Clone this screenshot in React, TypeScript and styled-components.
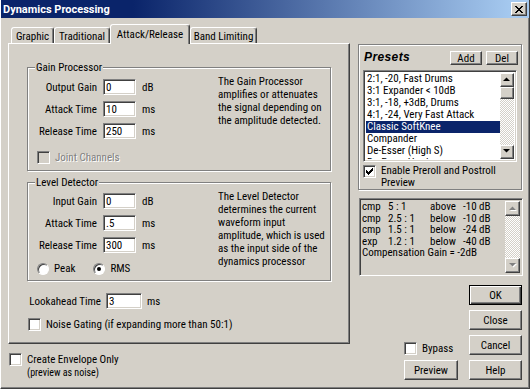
import styled, { createGlobalStyle, css } from "styled-components";

const GlobalStyle = createGlobalStyle`
  html, body {
    margin: 0;
    padding: 0;
    background: #d4d0c8;
  }
  body {
    font-family: "Roboto Condensed", "Liberation Sans", Arial, sans-serif;
    font-size: 11px;
    color: #000;
  }
  * { box-sizing: border-box; }
`

const presets = [
  '2:1, -20, Fast Drums',
  '3:1 Expander < 10dB',
  '3:1, -18, +3dB, Drums',
  '4:1, -24, Very Fast Attack',
  'Classic SoftKnee',
  'Compander',
  'De-Esser (High S)',
  'De-Esser Hard',
]

const infoRows = [
  ['cmp', '5 : 1', 'above', '-10 dB'],
  ['cmp', '2.5 : 1', 'below', '-10 dB'],
  ['cmp', '1.5 : 1', 'below', '-24 dB'],
  ['exp', '1.2 : 1', 'below', '-40 dB'],
]

// classic 7x7 check mark, one 3px column per x
const checkCols = [2, 3, 4, 3, 2, 1, 0]

function CheckBox(props: { checked?: boolean, disabled?: boolean }) {
  return (
    <CheckSquare $disabled={props.disabled}>
      {props.checked &&
        <svg width="7" height="7" viewBox="0 0 7 7" shapeRendering="crispEdges">
          {checkCols.map((y, x) => <rect key={x} x={x} y={y} width="1" height="3" fill="#000" />)}
        </svg>
      }
    </CheckSquare>
  )
}

function Arrow(props: { up?: boolean, disabled?: boolean }) {
  const points = props.up ? '0,4 7,4 3.5,0.5' : '0,0 7,0 3.5,3.5'
  return (
    <svg width="8" height="6" viewBox="0 0 8 6">
      {props.disabled && <polygon points={points} fill="#fff" transform="translate(1 1)" />}
      <polygon points={points} fill={props.disabled ? '#808080' : '#000'} />
    </svg>
  )
}

type FieldProps = {
  label: string
  value: string
  unit: string
}

function Field(props: FieldProps) {
  return (
    <>
      <FieldLabel>{props.label}</FieldLabel>
      <TextBox readOnly defaultValue={props.value} />
      <Unit>{props.unit}</Unit>
    </>
  )
}

export default function App() {
  return (
    <>
      <GlobalStyle />
      <Window>
        <TitleBar>
          <Title>Dynamics Processing</Title>
          <CloseButton>
            <svg width="8" height="7" viewBox="0 0 8 7" shapeRendering="crispEdges">
              <path d="M0 0h2v1h-2zM6 0h2v1h-2zM1 1h2v1h-2zM5 1h2v1h-2zM2 2h4v1h-4zM3 3h2v1h-2zM2 4h4v1h-4zM1 5h2v1h-2zM5 5h2v1h-2zM0 6h2v1h-2zM6 6h2v1h-2z" fill="#000" />
            </svg>
          </CloseButton>
        </TitleBar>

        <Body>
          <LeftColumn>
            <TabRow>
              <Tab $w={43}>Graphic</Tab>
              <Tab $w={56}>Traditional</Tab>
              <Tab $w={80} $active>Attack/Release</Tab>
              <Tab $w={67}>Band Limiting</Tab>
            </TabRow>

            <TabPanel>
              <GroupBox>
                <Caption>Gain Processor</Caption>
                <GroupInner>
                  <FieldColumn>
                    <FieldGrid $labelW={62} $inputW={33}>
                      <Field label="Output Gain" value="0" unit="dB" />
                      <Field label="Attack Time" value="10" unit="ms" />
                      <Field label="Release Time" value="250" unit="ms" />
                    </FieldGrid>
                    <OptionRow $top={12} $left={2} $disabled>
                      <CheckBox disabled />
                      <span>Joint Channels</span>
                    </OptionRow>
                  </FieldColumn>
                  <Description $top={-4}>
                    The Gain Processor<br />
                    amplifies or attenuates<br />
                    the signal depending on<br />
                    the amplitude detected.
                  </Description>
                </GroupInner>
              </GroupBox>

              <GroupBox $top={11} $bottom={5}>
                <Caption>Level Detector</Caption>
                <GroupInner $top={4}>
                  <FieldColumn>
                    <FieldGrid $labelW={62} $inputW={33}>
                      <Field label="Input Gain" value="0" unit="dB" />
                      <Field label="Attack Time" value=".5" unit="ms" />
                      <Field label="Release Time" value="300" unit="ms" />
                    </FieldGrid>
                    <RadioRow>
                      <OptionRow $left={2}>
                        <Radio />
                        <span>Peak</span>
                      </OptionRow>
                      <OptionRow>
                        <Radio $checked />
                        <span>RMS</span>
                      </OptionRow>
                    </RadioRow>
                  </FieldColumn>
                  <Description $top={-3}>
                    The Level Detector<br />
                    determines the current<br />
                    waveform input<br />
                    amplitude, which is used<br />
                    as the input side of the<br />
                    dynamics processor
                  </Description>
                </GroupInner>
              </GroupBox>

              <LookaheadGrid $labelW={74} $inputW={36}>
                <Field label="Lookahead Time" value="3" unit="ms" />
              </LookaheadGrid>

              <OptionRow $top={9} $left={1}>
                <CheckBox />
                <span>Noise Gating (if expanding more than 50:1)</span>
              </OptionRow>
            </TabPanel>

            <EnvelopeRow>
              <CheckBox />
              <div>
                <div>Create Envelope Only</div>
                <SmallNote>(preview as noise)</SmallNote>
              </div>
            </EnvelopeRow>
          </LeftColumn>

          <RightColumn>
            <PresetsBox>
              <PresetsHeader>
                <PresetsTitle>Presets</PresetsTitle>
                <SmallButton>Add</SmallButton>
                <SmallButton>Del</SmallButton>
              </PresetsHeader>

              <ListBox>
                <ListItems>
                  {presets.map(name =>
                    <ListItem key={name} $selected={name === 'Classic SoftKnee'}>{name}</ListItem>
                  )}
                </ListItems>
                <ScrollBar>
                  <ScrollArrow><Arrow up /></ScrollArrow>
                  <ScrollThumb />
                  <ScrollTrack />
                  <ScrollArrow><Arrow /></ScrollArrow>
                </ScrollBar>
              </ListBox>

              <EnableRow>
                <CheckBox checked />
                <span>Enable Preroll and Postroll<br />Preview</span>
              </EnableRow>
            </PresetsBox>

            <InfoBox>
              <InfoText>
                {infoRows.map((row, i) =>
                  <InfoRow key={i}>
                    {row.map((cell, j) => <span key={j}>{cell}</span>)}
                  </InfoRow>
                )}
                <div>Compensation Gain = -2dB</div>
              </InfoText>
              <ScrollBar $wide>
                <ScrollArrow $wide><Arrow up disabled /></ScrollArrow>
                <ScrollTrack />
                <ScrollArrow $wide><Arrow disabled /></ScrollArrow>
              </ScrollBar>
            </InfoBox>

            <ButtonArea>
              <ButtonStack>
                <OptionRow $left={0}>
                  <CheckBox />
                  <span>Bypass</span>
                </OptionRow>
                <DialogButton $w={54}>Preview</DialogButton>
              </ButtonStack>
              <ButtonStack>
                <DialogButton $w={53} $default>OK</DialogButton>
                <DialogButton $w={53}>Close</DialogButton>
                <DialogButton $w={53}>Cancel</DialogButton>
                <DialogButton $w={53}>Help</DialogButton>
              </ButtonStack>
            </ButtonArea>
          </RightColumn>
        </Body>
      </Window>
    </>
  )
}

const raised = css`
  background: #d4d0c8;
  border: 1px solid;
  border-color: #fff #404040 #404040 #fff;
  box-shadow: inset -1px -1px #808080;
`

const sunken = css`
  border: 1px solid;
  border-color: #808080 #fff #fff #808080;
  box-shadow: inset 1px 1px #404040, inset -1px -1px #d4d0c8;
`

const Window = styled.div`
  width: 530px;
  height: 389px;
  background: #d4d0c8;
  border-left: 1px solid #fff;
  border-right: 1px solid #404040;
  border-bottom: 1px solid #404040;
  box-shadow: inset 0 -1px #808080, inset -1px 0 #808080;
  overflow: hidden;
`

const TitleBar = styled.div`
  height: 18px;
  padding: 0 2px 0 2px;
  display: flex;
  align-items: center;
  justify-content: space-between;
  background: linear-gradient(90deg, #0a246a 0%, #0a246a 25%, #a6caf0 97%);
`

const Title = styled.div`
  color: #fff;
  font-family: Roboto, "Liberation Sans", Arial, sans-serif;
  font-weight: bold;
  font-size: 11px;
`

const CloseButton = styled.div`
  ${raised}
  width: 16px;
  height: 14px;
  display: flex;
  align-items: center;
  justify-content: center;
`

const Body = styled.div`
  display: flex;
  gap: 8px;
  padding: 6px 6px 0 7px;
`

const LeftColumn = styled.div`
  width: 342px;
`

const RightColumn = styled.div`
  width: 165px;
  padding-top: 20px;
`

const TabRow = styled.div`
  height: 19px;
  padding-left: 3px;
  display: flex;
  align-items: flex-end;
`

const Tab = styled.div<{ $w: number, $active?: boolean }>`
  width: ${p => p.$w}px;
  height: 16px;
  display: flex;
  align-items: center;
  justify-content: center;
  padding-top: 1px;
  white-space: nowrap;
  background: #d4d0c8;
  border: 1px solid;
  border-bottom: none;
  border-color: #fff #404040 transparent #fff;
  border-radius: 3px 3px 0 0;
  box-shadow: inset -1px 0 #808080;

  ${p => p.$active && css`
    height: 20px;
    margin-bottom: -1px;
    padding-bottom: 2px;
    position: relative;
    z-index: 1;
  `}
`

const TabPanel = styled.div`
  ${raised}
  height: 301px;
  padding: 23px 18px 0 18px;
`

const GroupBox = styled.div<{ $top?: number, $bottom?: number }>`
  margin-top: ${p => p.$top ?? 0}px;
  padding: 0 0 ${p => p.$bottom ?? 6}px 7px;
  border: 1px solid #808080;
  box-shadow: inset 1px 1px #fff, 1px 1px #fff;
`

const Caption = styled.div`
  width: fit-content;
  margin: -7px 0 0 0;
  padding: 0 1px;
  line-height: 13px;
  background: #d4d0c8;
`

const GroupInner = styled.div<{ $top?: number }>`
  display: flex;
  align-items: flex-start;
  margin-top: ${p => p.$top ?? 5}px;
`

const FieldColumn = styled.div`
  width: 183px;
  display: flex;
  flex-direction: column;
`

const FieldGrid = styled.div<{ $labelW: number, $inputW: number }>`
  display: grid;
  grid-template-columns: ${p => p.$labelW}px ${p => p.$inputW}px auto;
  column-gap: 6px;
  row-gap: 6px;
  align-items: center;
  align-content: start;
`

const LookaheadGrid = styled(FieldGrid)`
  width: 183px;
  margin-top: 12px;
  column-gap: 5px;
`

const FieldLabel = styled.div`
  text-align: right;
  white-space: nowrap;
`

const TextBox = styled.input`
  ${sunken}
  width: 100%;
  height: 16px;
  padding: 0 2px;
  margin: 0;
  background: #fff;
  font: inherit;
  outline: none;
`

const Unit = styled.div`
  white-space: nowrap;
`

const Description = styled.div<{ $top: number }>`
  margin-top: ${p => p.$top}px;
  line-height: 13px;
  white-space: nowrap;
`

const OptionRow = styled.div<{ $top?: number, $left?: number, $disabled?: boolean }>`
  display: flex;
  align-items: center;
  gap: 5px;
  height: 13px;
  margin-top: ${p => p.$top ?? 0}px;
  margin-left: ${p => p.$left ?? 0}px;
  white-space: nowrap;

  ${p => p.$disabled && css`
    color: #808080;
    text-shadow: 1px 1px #fff;
  `}
`

const RadioRow = styled.div`
  display: flex;
  gap: 18px;
  margin-top: 9px;
`

const CheckSquare = styled.div<{ $disabled?: boolean }>`
  ${sunken}
  width: 13px;
  height: 13px;
  flex-shrink: 0;
  display: flex;
  align-items: center;
  justify-content: center;
  background: ${p => p.$disabled ? '#d4d0c8' : '#fff'};
`

const Radio = styled.div<{ $checked?: boolean }>`
  width: 12px;
  height: 12px;
  flex-shrink: 0;
  border-radius: 50%;
  background: #fff;
  border: 1px solid;
  border-color: #808080 #fff #fff #808080;
  box-shadow: inset 1px 1px #404040;
  display: flex;
  align-items: center;
  justify-content: center;

  &::after {
    content: '';
    width: 4px;
    height: 4px;
    border-radius: 50%;
    background: ${p => p.$checked ? '#000' : 'transparent'};
  }
`

const EnvelopeRow = styled.div`
  display: flex;
  align-items: flex-start;
  gap: 5px;
  margin: 9px 0 0 1px;
  line-height: 13px;
`

const SmallNote = styled.div`
  font-size: 10px;
  line-height: 14px;
`

const PresetsBox = styled.div`
  height: 146px;
  width: 164px;
  padding: 0 3px 0 4px;
  border: 1px solid #808080;
  box-shadow: inset 1px 1px #fff, 1px 1px #fff;
`

const PresetsHeader = styled.div`
  display: flex;
  align-items: flex-end;
  gap: 4px;
  padding-top: 5px;
  height: 20px;
`

const PresetsTitle = styled.div`
  flex: 1;
  font-family: "Liberation Sans", Arial, sans-serif;
  font-size: 12px;
  font-weight: bold;
  font-style: italic;
  letter-spacing: 0.4px;
  line-height: 15px;
  padding-left: 1px;
`

const SmallButton = styled.div`
  ${raised}
  width: 32px;
  height: 14px;
  display: flex;
  align-items: center;
  justify-content: center;
`

const ListBox = styled.div`
  ${sunken}
  display: flex;
  width: 154px;
  height: 92px;
  margin-top: 5px;
  padding: 2px;
  background: #fff;
`

const ListItems = styled.div`
  flex: 1;
  overflow: hidden;
`

const ListItem = styled.div<{ $selected?: boolean }>`
  height: 12px;
  line-height: 12px;
  padding-left: 1px;
  white-space: nowrap;
  background: ${p => p.$selected ? '#0a246a' : 'transparent'};
  color: ${p => p.$selected ? '#fff' : '#000'};
`

const ScrollBar = styled.div<{ $wide?: boolean }>`
  width: ${p => p.$wide ? 15 : 14}px;
  display: flex;
  flex-direction: column;
`

const ScrollArrow = styled.div<{ $wide?: boolean }>`
  ${raised}
  height: ${p => p.$wide ? 15 : 14}px;
  display: flex;
  align-items: center;
  justify-content: center;
`

const ScrollThumb = styled.div`
  ${raised}
  height: 12px;
`

const ScrollTrack = styled.div`
  flex: 1;
  background: repeating-conic-gradient(#fff 0 25%, #d4d0c8 0 50%) 0 0 / 2px 2px;
`

const EnableRow = styled.div`
  display: flex;
  align-items: flex-start;
  gap: 5px;
  margin-top: 3px;
  line-height: 12px;
`

const InfoBox = styled.div`
  ${sunken}
  display: flex;
  width: 164px;
  height: 78px;
  margin: 8px 0 0 1px;
  padding: 2px;
`

const InfoText = styled.div`
  flex: 1;
  line-height: 11.5px;
  white-space: nowrap;
`

const InfoRow = styled.div`
  display: grid;
  grid-template-columns: 26px 42px 33px auto;
`

const ButtonArea = styled.div`
  display: flex;
  justify-content: flex-end;
  align-items: flex-end;
  gap: 11px;
  margin-top: 9px;
  padding-right: 1px;
`

const ButtonStack = styled.div`
  display: flex;
  flex-direction: column;
  gap: 5px;
`

const DialogButton = styled.div<{ $w: number, $default?: boolean }>`
  ${raised}
  width: ${p => p.$w}px;
  height: 20px;
  display: flex;
  align-items: center;
  justify-content: center;

  ${p => p.$default && css`
    border-color: #000;
    box-shadow: inset 1px 1px #fff, inset -1px -1px #404040, inset -2px -2px #808080;
  `}
`
